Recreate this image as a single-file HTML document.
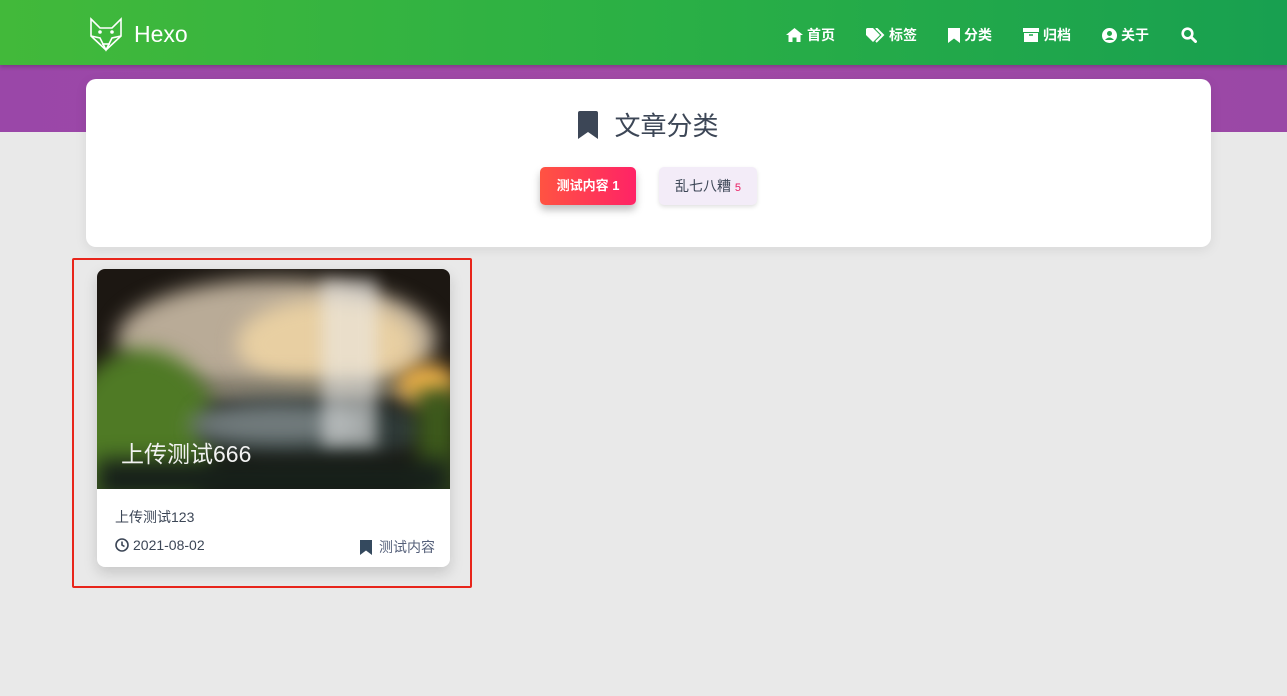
<!DOCTYPE html>
<html><head><meta charset="utf-8"><style>
*{margin:0;padding:0;box-sizing:border-box}
body{width:1287px;height:696px;background:#e9e9e9;font-family:"Liberation Sans","Noto Sans CJK SC",sans-serif;position:relative;overflow:hidden}
.banner{position:absolute;top:0;left:0;width:1287px;height:132px;background:linear-gradient(90deg,#9a47a8,#a24aa6 50%,#9a48a6)}
.nav{position:absolute;top:0;left:0;width:1287px;height:65px;background:linear-gradient(90deg,#42b93a,#2bb045 50%,#18a050);box-shadow:0 2px 4px rgba(0,0,0,.2)}
.logo{position:absolute;left:88px;top:16px;display:flex;align-items:center;color:#fff}
.logo span{font-size:23px;margin-left:10px}
.menu{position:absolute;top:26px;left:786px;color:#fff;font-size:14px;font-weight:bold}
.menu div{position:absolute;display:flex;align-items:center;height:18px;white-space:nowrap}
.menu svg{margin-right:4px}
.cat{position:absolute;left:86px;top:79px;width:1125px;height:168px;background:#fff;border-radius:10px;box-shadow:0 3px 12px rgba(0,0,0,.08)}
.title{position:absolute;top:27px;left:0;width:100%;text-align:center;font-size:26px;color:#3c4656;display:flex;justify-content:center;align-items:center}
.b1{position:absolute;left:454px;top:88px;width:96px;height:38px;border-radius:5px;background:linear-gradient(90deg,#ff5342,#ff2366);color:#fff;font-size:13px;font-weight:bold;text-align:center;line-height:38px;box-shadow:0 5px 8px rgba(0,0,0,.25)}
.b2{position:absolute;left:573px;top:88px;width:98px;height:38px;border-radius:5px;background:#f3ecf8;color:#3c4656;font-size:14px;text-align:center;line-height:38px;box-shadow:0 2px 4px rgba(0,0,0,.12)}
.b2 i{font-style:normal;color:#e91e63;font-size:11px}
.frame{position:absolute;left:72px;top:258px;width:400px;height:330px;border:2px solid #e8251b;border-radius:2px}
.card{position:absolute;left:97px;top:269px;width:353px;height:298px;background:#fff;border-radius:8px;overflow:hidden;box-shadow:0 6px 14px rgba(0,0,0,.15)}
.img{position:absolute;left:0;top:0;width:353px;height:220px;overflow:hidden;background:#1c1712}
.img .l{position:absolute;filter:blur(10px)}
.img .t{position:absolute;left:24px;top:166px;color:#f2f2f2;font-size:23px}
.c1{position:absolute;left:18px;top:238px;font-size:14px;color:#3c4656}
.c2{position:absolute;left:18px;top:268px;font-size:14px;color:#3c4656;display:flex;align-items:center}
.c3{position:absolute;right:15px;top:268px;font-size:14px;color:#55607a;display:flex;align-items:center}
</style></head><body>
<div class="banner"></div>
<div class="nav">
<div class="logo"><svg width="36" height="36" viewBox="0 0 36 36" fill="none" stroke="#fff" stroke-width="1.6"><path d="M3 3 L12 12 H24 L33 3 V20 L18 34 L3 20 Z"/><path d="M3 20 L12 22 L18 34 L24 22 L33 20"/><path d="M14 28 H22"/><circle cx="12" cy="16" r="1" fill="#fff"/><circle cx="24" cy="16" r="1" fill="#fff"/></svg><span>Hexo</span></div>
<div class="menu">
<div style="left:0"><svg width="17" height="14" viewBox="0 0 17 14"><path d="M8.5 0 L17 7 H14.5 V14 H10.5 V9.5 H6.5 V14 H2.5 V7 H0 Z" fill="#fff"/></svg>首页</div>
<div style="left:80px"><svg width="19" height="15" viewBox="0 0 19 15"><path d="M0 1 V7 L7 14 L14 7 L7 0 H1 Z M2.5 3 a1.2 1.2 0 1 0 0.1 0" fill="#fff"/><path d="M10 0 L17 7 L10 14" stroke="#fff" stroke-width="2" fill="none"/></svg>标签</div>
<div style="left:162px"><svg width="12" height="15" viewBox="0 0 12 15"><path d="M0 0 H12 V15 L6 10.5 L0 15 Z" fill="#fff"/></svg>分类</div>
<div style="left:237px"><svg width="16" height="14" viewBox="0 0 16 14"><path d="M0 0 H16 V4 H0 Z M1 5 H15 V14 H1 Z" fill="#fff"/><path d="M6 7 H10" stroke="#1fa64a" stroke-width="1.5"/></svg>归档</div>
<div style="left:316px"><svg width="15" height="15" viewBox="0 0 15 15"><circle cx="7.5" cy="7.5" r="7.5" fill="#fff"/><circle cx="7.5" cy="5.5" r="2.5" fill="#22a84a"/><path d="M3 12 Q7.5 7 12 12" fill="#22a84a"/></svg>关于</div>
<div style="left:395px"><svg width="16" height="16" viewBox="0 0 16 16"><circle cx="6.5" cy="6.5" r="4.8" stroke="#fff" stroke-width="2.6" fill="none"/><path d="M10 10 L14.5 14.5" stroke="#fff" stroke-width="3" stroke-linecap="round"/></svg></div>
</div></div>
<div class="cat">
<div class="title"><svg width="20" height="28" viewBox="0 0 20 28" style="margin-right:16px"><path d="M0 2 Q0 0 2 0 H18 Q20 0 20 2 V28 L10 21 L0 28 Z" fill="#3c4656"/></svg>文章分类</div>
<div class="b1">测试内容 1</div>
<div class="b2">乱七八糟 <i>5</i></div>
</div>
<div class="frame"></div>
<div class="card">
<div class="img">
<div class="l" style="left:20px;top:10px;width:320px;height:120px;border-radius:50%;background:#b9ab97"></div>
<div class="l" style="left:140px;top:30px;width:180px;height:90px;border-radius:50%;background:#e8cfa2"></div>
<div class="l" style="left:80px;top:110px;width:260px;height:20px;background:#7f7a6a"></div>
<div class="l" style="left:-30px;top:80px;width:150px;height:170px;border-radius:50%;background:#4f7a25"></div>
<div class="l" style="left:100px;top:130px;width:230px;height:60px;border-radius:40%;background:#2f3a38"></div>
<div class="l" style="left:90px;top:135px;width:180px;height:40px;border-radius:50%;background:#8e979a;opacity:.7"></div>
<div class="l" style="left:225px;top:10px;width:55px;height:170px;background:#ececec;opacity:.55;filter:blur(8px)"></div>
<div class="l" style="left:300px;top:95px;width:60px;height:40px;border-radius:50%;background:#f5b54a"></div>
<div class="l" style="left:320px;top:120px;width:40px;height:110px;background:#3d5a1c"></div>
<div class="l" style="left:0;top:190px;width:353px;height:40px;background:#17201a"></div>
<div class="t">上传测试666</div></div>
<div class="c1">上传测试123</div>
<div class="c2"><svg width="14" height="14" viewBox="0 0 14 14" style="margin-right:4px"><circle cx="7" cy="7" r="6" stroke="#3c4656" stroke-width="1.6" fill="none"/><path d="M7 3.5 V7 L9.5 8.5" stroke="#3c4656" stroke-width="1.6" fill="none"/></svg>2021-08-02</div>
<div class="c3"><svg width="12" height="15" viewBox="0 0 12 15" style="margin-right:7px"><path d="M0 0 H12 V15 L6 10.5 L0 15 Z" fill="#34495e"/></svg>测试内容</div>
</div>
</body></html>
